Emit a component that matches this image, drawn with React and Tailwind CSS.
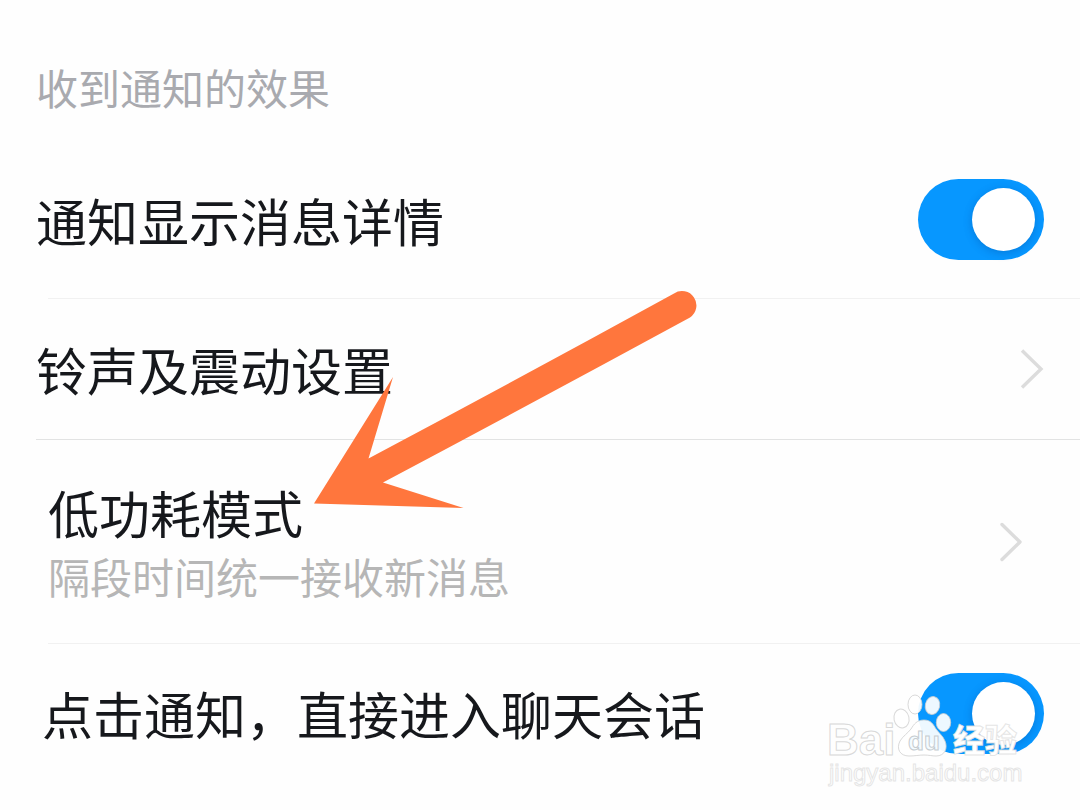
const rowText = "text-[51px] leading-[60px] text-[#16181c]";

function Switch({ id }) {
  return (
    <input
      id={id}
      type="checkbox"
      role="switch"
      defaultChecked
      className="relative h-[81px] w-[126px] shrink-0 cursor-pointer appearance-none rounded-full bg-gray-300 before:absolute before:top-[9px] before:left-[9px] before:size-[63px] before:rounded-full before:bg-white before:shadow-[0_2px_8px_rgba(0,60,140,0.3)] checked:bg-[#0797ff] checked:before:left-[54px]"
    />
  );
}

function Chevron({ cap, join }) {
  return (
    <svg
      className="h-10 w-6 shrink-0"
      viewBox="0 0 24 40"
      fill="none"
      stroke="#dcdcdc"
      strokeWidth="3.4"
      strokeLinecap={cap}
      strokeLinejoin={join}
      aria-hidden="true"
    >
      <path d={cap === "round" ? "M2 2.500 20 20 2 37.500" : "M2 1.500 21 20 2 38.500"} />
    </svg>
  );
}

function Arrow() {
  return (
    <svg
      className="pointer-events-none absolute top-[280px] left-[300px] h-[240px] w-[410px]"
      viewBox="300 280 410 240"
      aria-hidden="true"
    >
      <path
        fill="#ff763d"
        d="M314 503.5 393 377 368.5 458.5 Q520 378 674 293.5 A14 14 0 0 1 690 317.5 Q540 399 383 482.5 L463.500 508Z"
      />
    </svg>
  );
}

function Watermark() {
  return (
    <svg
      className="pointer-events-none absolute top-[685px] right-[50px] h-[110px] w-[210px]"
      viewBox="820 685 210 110"
      role="img"
      aria-label="Baidu 经验 jingyan.baidu.com"
    >
      <g fill="#fff" fillOpacity="0.93" stroke="#cfcfcf" strokeOpacity="0.8" strokeWidth="1">
        <ellipse cx="901.500" cy="718.500" rx="7.500" ry="9.500" transform="rotate(-12 901.5 718.5)" />
        <ellipse cx="915" cy="704.500" rx="7" ry="9.500" />
        <ellipse cx="932.500" cy="705.500" rx="7.200" ry="9" transform="rotate(12 932.5 705.5)" />
        <ellipse cx="943.500" cy="722.500" rx="7.200" ry="9" />
        <path d="M924 720c-7 0-10 4-13 9-3 4-8 7-11 12-4 8 0 15 9 15 6 0 10-1 15-1s8 1 12 1c9 0 12-8 9-15-2-5-6-8-9-12-3-5-5-9-12-9Z" />
        <text x="827" y="755" fontSize="44" fontWeight="700" className="font-['Liberation_Sans',sans-serif]">
          Bai
        </text>
        <text x="953" y="752" fontSize="32" fontWeight="900" fillOpacity="1" stroke="#dedede" className="font-['Noto_Sans_CJK_SC',sans-serif]">
          经验
        </text>
        <text x="829" y="781" fontSize="24" stroke="#dedede" className="font-['Liberation_Sans',sans-serif]">
          jingyan.baidu.com
        </text>
      </g>
      <text
        x="908"
        y="750"
        fontSize="26"
        fontWeight="700"
        fill="#f4fbff"
        stroke="#c6cdd1"
        strokeWidth="1"
        className="font-['Liberation_Sans',sans-serif]"
      >
        du
      </text>
    </svg>
  );
}

export default function App() {
  return (
    <main className="relative min-h-screen overflow-hidden bg-[#fefefe] font-['Noto_Sans_CJK_SC',sans-serif]">
      <h1 className="flex h-[141px] items-end px-9 pb-6 text-[42px] leading-[60px] text-[#a9aaaf]">
        收到通知的效果
      </h1>

      <div className="flex h-[157px] items-center justify-between px-9">
        <label htmlFor="details" className={rowText}>
          通知显示消息详情
        </label>
        <Switch id="details" />
      </div>
      <hr className="ml-12 border-[#f1f1f1]" />

      <a href="#sound" className="flex h-[140px] items-center justify-between px-9">
        <span className={rowText}>铃声及震动设置</span>
        <Chevron cap="butt" join="miter" />
      </a>
      <hr className="ml-9 border-[#e2e3e3]" />

      <a href="#low-power" className="flex h-[203px] items-center justify-between pr-14 pl-12">
        <span className="flex flex-col gap-1 pt-1">
          <span className={rowText}>低功耗模式</span>
          <span className="text-[42px] leading-[60px] text-[#b6b6b6]">隔段时间统一接收新消息</span>
        </span>
        <Chevron cap="round" join="round" />
      </a>
      <hr className="ml-12 border-[#f1f1f1]" />

      <div className="flex h-[138px] items-center justify-between pr-9 pl-[42px]">
        <label htmlFor="open-chat" className={rowText}>
          点击通知，直接进入聊天会话
        </label>
        <Switch id="open-chat" />
      </div>

      <Arrow />
      <Watermark />
    </main>
  );
}
